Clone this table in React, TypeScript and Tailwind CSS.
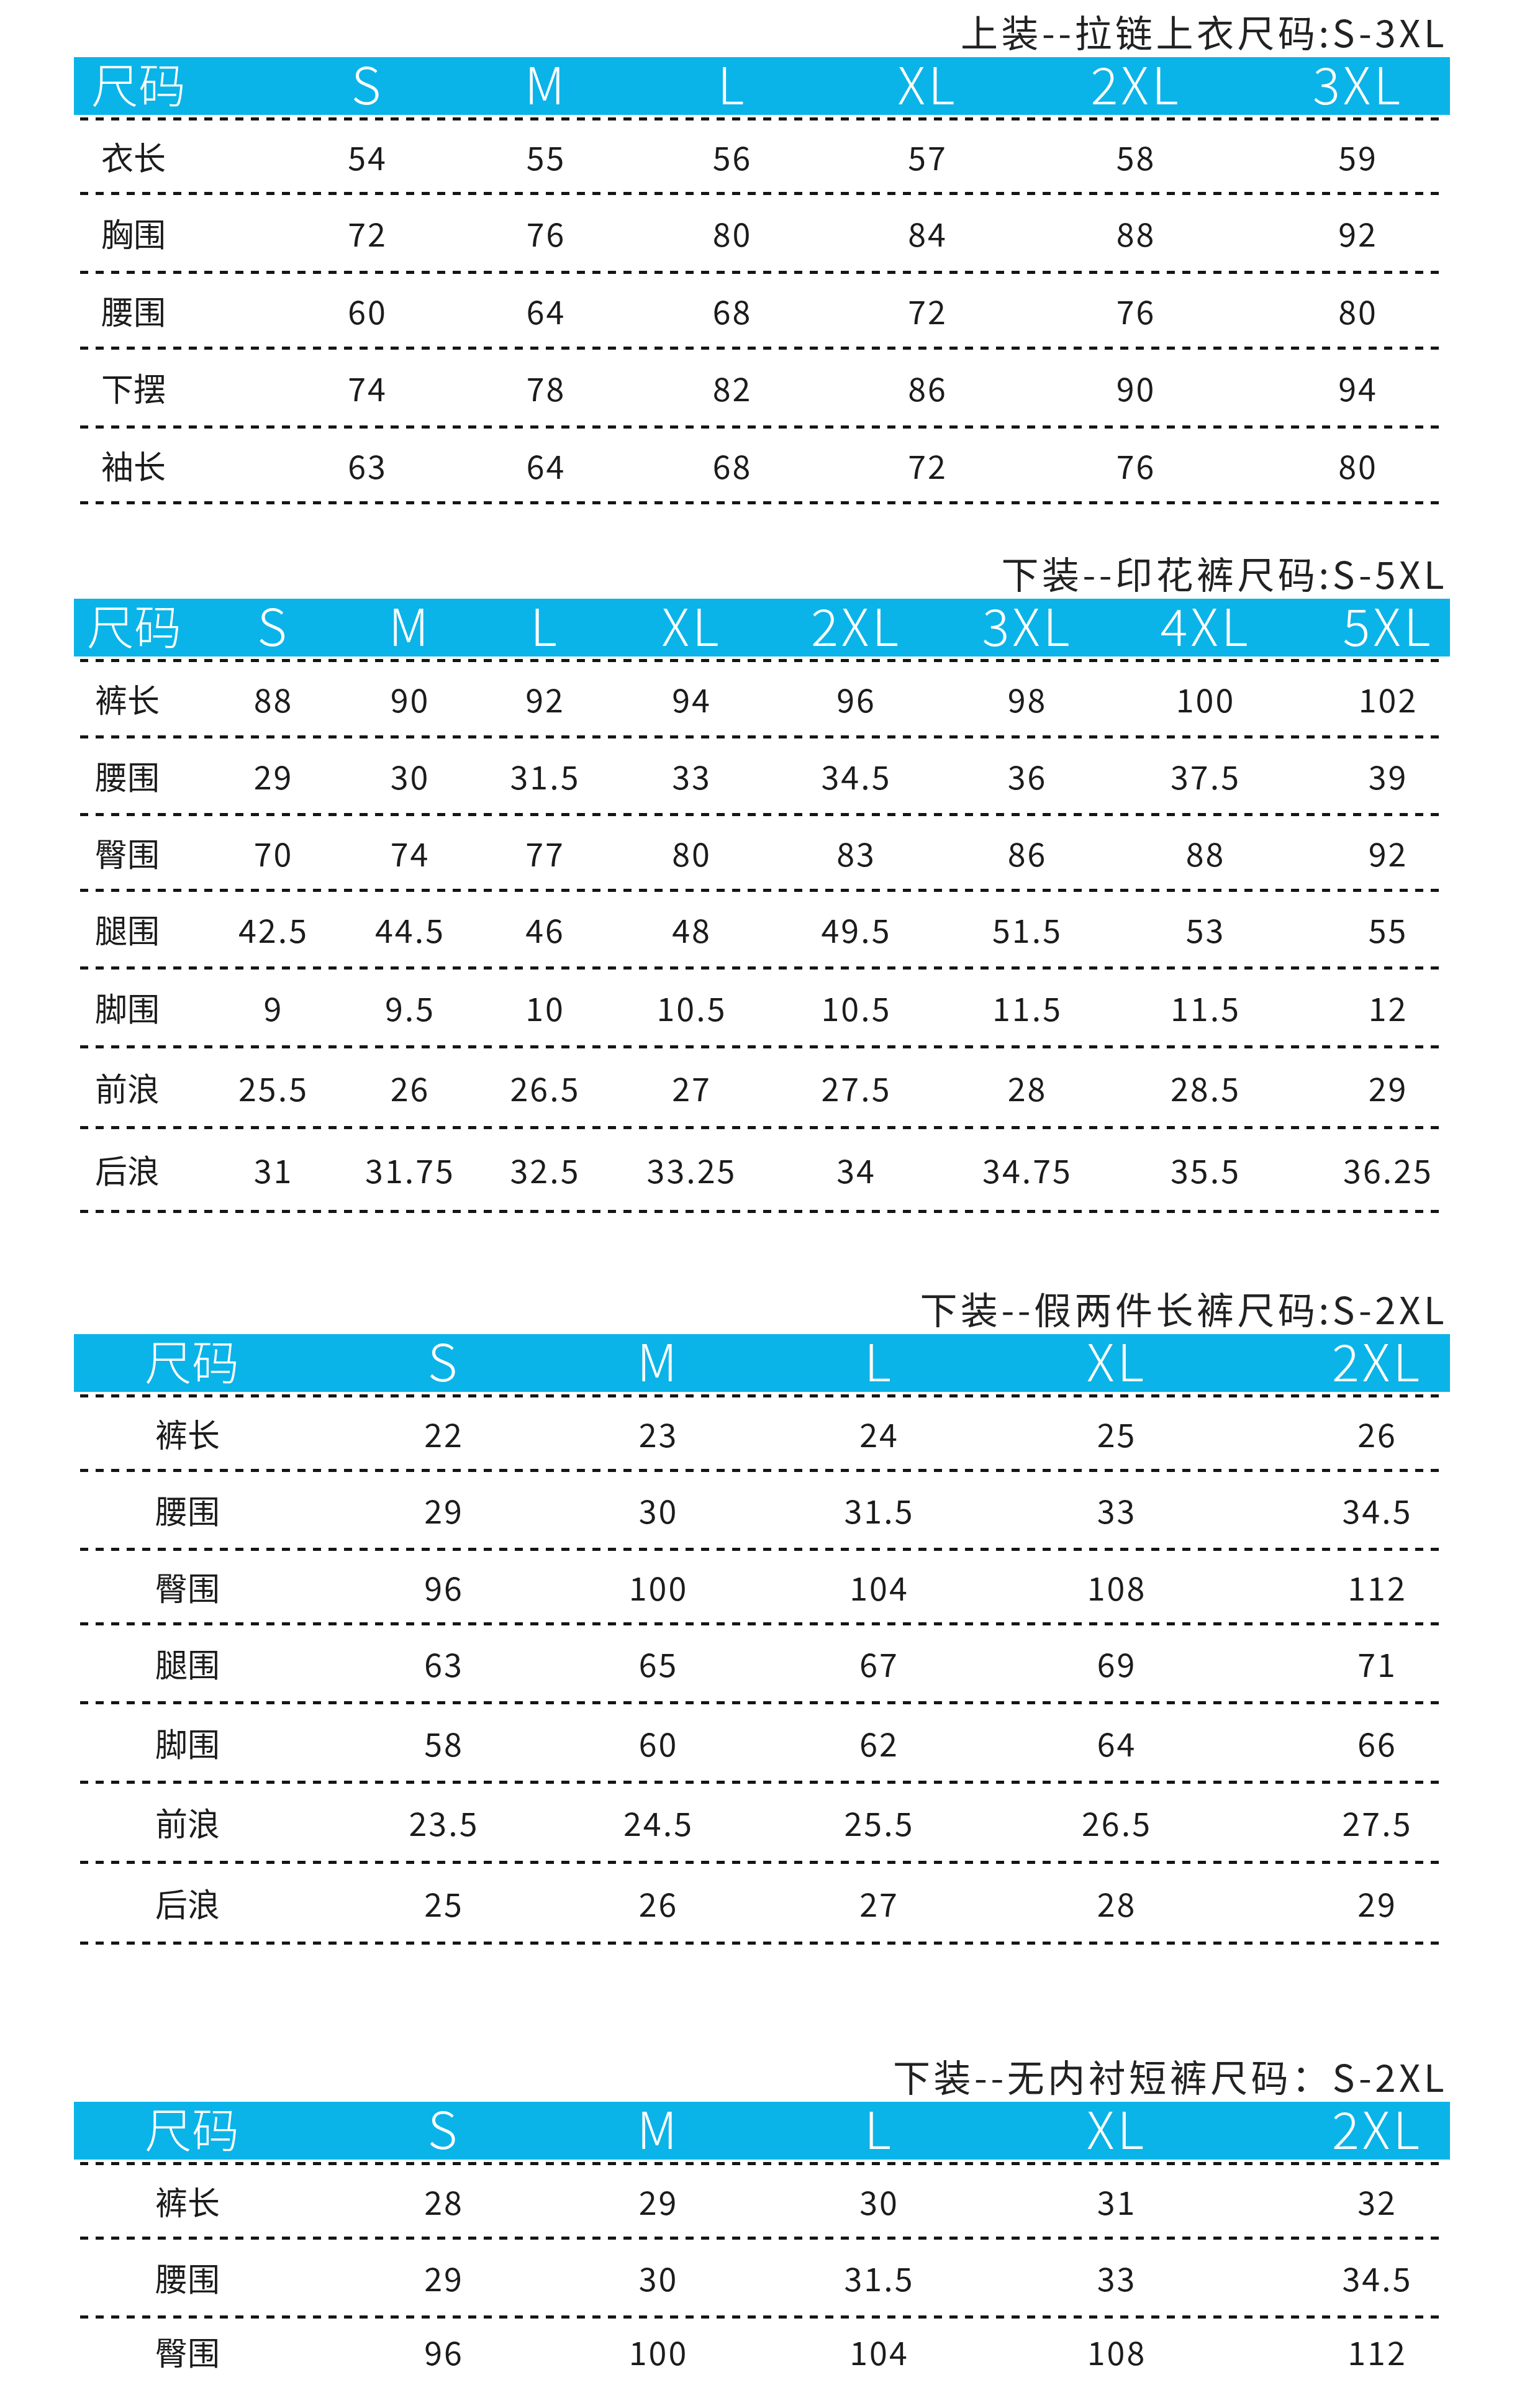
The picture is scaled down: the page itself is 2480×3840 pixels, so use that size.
type SizeTable = {
  title: string;
  gap: string;
  cols: string;
  headPad: string;
  labelPad: string;
  rowH: string[];
  sizes: string[];
  rows: (string | number)[][];
  cutOff?: boolean;
};

const tables: SizeTable[] = [
  {
    title: '上装--拉链上衣尺码:S-3XL',
    gap: 'mt-0',
    cols: 'grid-cols-[332px_282px_293px_307px_322px_349px_366px]',
    headPad: 'pl-[28px]',
    labelPad: 'pl-[44px]',
    rowH: ['h-[115px]', 'h-[122px]', 'h-[117px]', 'h-[122px]', 'h-[117px]'],
    sizes: ['S', 'M', 'L', 'XL', '2XL', '3XL'],
    rows: [
      ['衣长', 54, 55, 56, 57, 58, 59],
      ['胸围', 72, 76, 80, 84, 88, 92],
      ['腰围', 60, 64, 68, 72, 76, 80],
      ['下摆', 74, 78, 82, 86, 90, 94],
      ['袖长', 63, 64, 68, 72, 76, 80],
    ],
  },
  {
    title: '下装--印花裤尺码:S-5XL',
    gap: 'mt-[60px]',
    cols: 'grid-cols-[210px_223px_217px_218px_254px_276px_275px_299px_289px]',
    headPad: 'pl-[21px]',
    labelPad: 'pl-[34px]',
    rowH: ['h-[118px]', 'h-[120px]', 'h-[117px]', 'h-[120px]', 'h-[122px]', 'h-[125px]', 'h-[130px]'],
    sizes: ['S', 'M', 'L', 'XL', '2XL', '3XL', '4XL', '5XL'],
    rows: [
      ['裤长', 88, 90, 92, 94, 96, 98, 100, 102],
      ['腰围', 29, 30, 31.5, 33, 34.5, 36, 37.5, 39],
      ['臀围', 70, 74, 77, 80, 83, 86, 88, 92],
      ['腿围', 42.5, 44.5, 46, 48, 49.5, 51.5, 53, 55],
      ['脚围', 9, 9.5, 10, 10.5, 10.5, 11.5, 11.5, 12],
      ['前浪', 25.5, 26, 26.5, 27, 27.5, 28, 28.5, 29],
      ['后浪', 31, 31.75, 32.5, 33.25, 34, 34.75, 35.5, 36.25],
    ],
  },
  {
    title: '下装--假两件长裤尺码:S-2XL',
    gap: 'mt-[103px]',
    cols: 'grid-cols-[425px_342px_349px_362px_403px_436px]',
    headPad: 'pl-[114px]',
    labelPad: 'pl-[131px]',
    rowH: ['h-[115px]', 'h-[122px]', 'h-[115px]', 'h-[122px]', 'h-[123px]', 'h-[124px]', 'h-[125px]'],
    sizes: ['S', 'M', 'L', 'XL', '2XL'],
    rows: [
      ['裤长', 22, 23, 24, 25, 26],
      ['腰围', 29, 30, 31.5, 33, 34.5],
      ['臀围', 96, 100, 104, 108, 112],
      ['腿围', 63, 65, 67, 69, 71],
      ['脚围', 58, 60, 62, 64, 66],
      ['前浪', 23.5, 24.5, 25.5, 26.5, 27.5],
      ['后浪', 25, 26, 27, 28, 29],
    ],
  },
  {
    title: '下装--无内衬短裤尺码：S-2XL',
    gap: 'mt-[161px]',
    cols: 'grid-cols-[425px_342px_349px_362px_403px_436px]',
    headPad: 'pl-[114px]',
    labelPad: 'pl-[131px]',
    rowH: ['h-[115px]', 'h-[122px]', 'h-[106px]'],
    sizes: ['S', 'M', 'L', 'XL', '2XL'],
    rows: [
      ['裤长', 28, 29, 30, 31, 32],
      ['腰围', 29, 30, 31.5, 33, 34.5],
      ['臀围', 96, 100, 104, 108, 112],
    ],
    cutOff: true,
  },
];

function Dashes() {
  return (
    <div className="ml-[10px] h-[5px] w-[2198px] bg-[repeating-linear-gradient(90deg,#151515_0px,#151515_13px,transparent_13px,transparent_25px)]" />
  );
}

function Table({ t }: { t: SizeTable }) {
  const last = t.rows.length - 1;
  return (
    <section className={t.gap}>
      <div className="flex h-[92px] items-end justify-end pb-[12px] pr-[4px]">
        <h2 className="text-[60px] font-normal leading-[60px] tracking-[5.5px] text-[#222]">
          {t.title}
        </h2>
      </div>

      <div className="h-[93px] w-full bg-[#0ab4e8] text-white">
        <div className={`grid h-full items-center pb-[16px] ${t.cols}`}>
          <span className={`text-[76px] font-light leading-none ${t.headPad}`}>
            尺码
          </span>
          {t.sizes.map((s) => (
            <span
              key={s}
              className="text-center text-[82px] font-light leading-none tracking-[5px]"
            >
              {s}
            </span>
          ))}
        </div>
      </div>

      <div className="mt-[4px]">
        <Dashes />
        {t.rows.map((row, r) => (
          <div key={row[0]}>
            <div className={`grid items-center text-[#1c1c1c] ${t.cols} ${t.rowH[r]}`}>
              <span className={`text-[52px] leading-none ${t.labelPad}`}>{row[0]}</span>
              {row.slice(1).map((v, i) => (
                <span
                  key={i}
                  className="text-center text-[52px] leading-none tracking-[3px]"
                >
                  {v}
                </span>
              ))}
            </div>
            {/* the last table runs off the bottom of the page */}
            {!(t.cutOff && r === last) && <Dashes />}
          </div>
        ))}
      </div>
    </section>
  );
}

export default function App() {
  return (
    <div className="h-[3840px] w-[2480px] overflow-hidden bg-white font-['Noto_Sans_CJK_SC',sans-serif]">
      <div className="ml-[119px] w-[2216px]">
        {tables.map((t) => (
          <Table key={t.title} t={t} />
        ))}
      </div>
    </div>
  );
}
